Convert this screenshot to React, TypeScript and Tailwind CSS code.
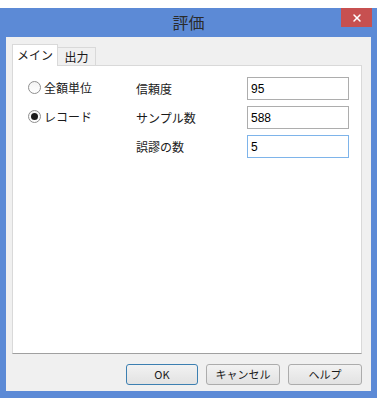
import { X } from 'lucide-react';

const font = { fontFamily: '"Noto Sans CJK JP", "Noto Sans", sans-serif' };

function Radio({ checked, label }: { checked?: boolean; label: string }) {
    return (
        <div className="flex items-center h-[13px] gap-[3px]">
            <span className="w-[13px] h-[13px] rounded-full border border-[#8f8f8f] bg-gradient-to-b from-[#f4f4f4] to-white flex items-center justify-center">
                {checked && <span className="w-[7px] h-[7px] rounded-full bg-[#1a1a1a]" />}
            </span>
            <span className="text-[12px] leading-none text-[#1a1a1a]">{label}</span>
        </div>
    );
}

function Field({ label, value, focused }: { label: string; value: string; focused?: boolean }) {
    return (
        <div className="flex items-center h-[23px]">
            <span className="w-[111px] text-[12px] leading-none text-[#1a1a1a]">{label}</span>
            <div
                className={
                    focused
                        ? 'w-[102px] h-[23px] bg-white border border-[#7eb4ea] flex items-center px-[3px]'
                        : 'w-[102px] h-[23px] bg-white border border-[#adadad] flex items-center px-[3px]'
                }
            >
                <span className="text-[12px] leading-none text-[#000] font-['Liberation_Sans',sans-serif]">{value}</span>
            </div>
        </div>
    );
}

function Btn({ label, primary, w }: { label: string; primary?: boolean; w: string }) {
    return (
        <button
            className={
                (primary ? 'border-[#3c7fb1] ' : 'border-[#acacac] ') +
                w +
                ' h-[21px] rounded-[3px] border bg-gradient-to-b from-[#f2f2f2] to-[#e2e2e2] text-[11px] leading-none text-[#1a1a1a] flex items-center justify-center'
            }
        >
            {label}
        </button>
    );
}

export default function App() {
    return (
        <div className="w-[377px] h-[398px] bg-white flex flex-col" style={font}>
            <div className="h-[8px]" />
            <div className="flex-1 bg-[#5c8ad6] flex flex-col">
                {/* title bar */}
                <div className="h-[29px] relative flex items-center justify-center">
                    <span className="text-[16px] leading-none text-[#2b2b2b] -mt-[2px]">評価</span>
                    <div className="absolute right-[5px] top-0 w-[31px] h-[19px] bg-[#c75050] flex items-center justify-center">
                        <X className="w-[12px] h-[12px] text-white" strokeWidth={3} />
                    </div>
                </div>
                {/* client */}
                <div className="mx-[6px] mb-[7px] flex-1 bg-[#f0f0f0] flex flex-col pl-[6px] pr-[9px] pt-[6px]">
                    <div className="flex items-end h-[22px]">
                        <div className="w-[46px] h-[22px] bg-white border border-b-0 border-[#d9d9d9] flex items-center justify-center relative z-10 -mb-px">
                            <span className="text-[12px] leading-none text-[#1a1a1a] -mt-[2px]">メイン</span>
                        </div>
                        <div className="w-[38px] h-[18px] bg-[#f0f0f0] border border-b-0 border-l-0 border-[#d9d9d9] flex items-center justify-center">
                            <span className="text-[12px] leading-none text-[#1a1a1a]">出力</span>
                        </div>
                    </div>
                    <div className="w-[350px] h-[289px] bg-white border border-[#d9d9d9] border-b-[#a0a0a0] flex pt-[11px] pl-[15px]">
                        <div className="w-[108px] flex flex-col gap-[16px] pt-[4px]">
                            <Radio label="全額単位" />
                            <Radio checked label="レコード" />
                        </div>
                        <div className="flex flex-col gap-[6px]">
                            <Field label="信頼度" value="95" />
                            <Field label="サンプル数" value="588" />
                            <Field label="誤謬の数" value="5" focused />
                        </div>
                    </div>
                    <div className="flex justify-end gap-[8px] mt-[10px]">
                        <Btn label="OK" primary w="w-[72px]" />
                        <Btn label="キャンセル" w="w-[74px]" />
                        <Btn label="ヘルプ" w="w-[74px]" />
                    </div>
                </div>
            </div>
        </div>
    );
}
